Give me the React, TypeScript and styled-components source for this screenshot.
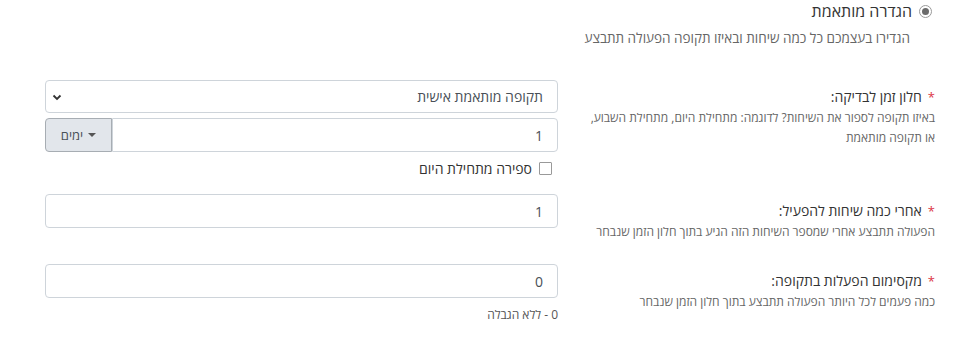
import React from 'react';
import styled, { createGlobalStyle } from 'styled-components';

const GlobalStyle = createGlobalStyle`
  body {
    margin: 0;
    background: #fff;
    font-family: "Open Sans", "Noto Sans", sans-serif;
    color: #333;
  }
`;

const Page = styled.div`
  direction: rtl;
  padding: 2px 44px 0 45px;
`;

const RadioHeader = styled.label`
  display: flex;
  align-items: center;
  gap: 7px;
  padding-right: 3px;
  font-size: 16px;
  color: #333;
  height: 18px;
`;

const RadioCircle = styled.span`
  width: 13px;
  height: 13px;
  border-radius: 50%;
  border: 1px solid #9a9a9a;
  display: flex;
  align-items: center;
  justify-content: center;
  box-sizing: border-box;

  &::after {
    content: '';
    width: 7px;
    height: 7px;
    border-radius: 50%;
    background: #6b6b6b;
  }
`;

const SubTitle = styled.div`
  font-size: 13.5px;
  color: #666;
  padding-right: 25px;
  margin-top: 9px;
  margin-bottom: 33px;
`;

const Row = styled.div<{ $gap: number }>`
  display: grid;
  grid-template-columns: 355px 1fr;
  column-gap: 22px;
  margin-bottom: ${(p) => p.$gap}px;
`;

const LabelBlock = styled.div`
  padding-top: 7px;
`;

const Label = styled.div`
  font-size: 14px;
  color: #333;
  line-height: 20px;
`;

const Star = styled.span`
  color: #dc3545;
  margin-left: 6px;
  font-size: 13px;
`;

const Desc = styled.div`
  font-size: 12px;
  color: #666;
  line-height: 20px;
  margin-top: 1px;
`;

const Field = styled.div`
  display: flex;
  flex-direction: column;
`;

const Box = styled.div`
  height: 34px;
  box-sizing: border-box;
  border: 1px solid #ced4da;
  border-radius: 4px;
  display: flex;
  align-items: center;
  padding: 0 14px;
  font-size: 14px;
  color: #495057;
  background: #fff;
`;

const SelectBox = styled(Box)`
  justify-content: space-between;
  padding-left: 6px;
  height: 33px;
`;

const Group = styled.div`
  display: flex;
  margin-top: 5px;
  height: 34px;
`;

const GroupInput = styled(Box)`
  flex: 1;
  border-radius: 0 4px 4px 0;
`;

const GroupButton = styled.div`
  width: 67px;
  box-sizing: border-box;
  border: 1px solid #a7adb3;
  border-radius: 4px 0 0 4px;
  background: #e2e6eb;
  display: flex;
  align-items: center;
  justify-content: center;
  gap: 5px;
  font-size: 13px;
  color: #495057;
`;

const Caret = styled.span`
  width: 0;
  height: 0;
  border-left: 4px solid transparent;
  border-right: 4px solid transparent;
  border-top: 4px solid #555;
`;

const CheckRow = styled.label`
  display: flex;
  align-items: center;
  gap: 7px;
  margin-top: 8px;
  padding-right: 6px;
  font-size: 14px;
  color: #333;
  height: 16px;
`;

const CheckBox = styled.span`
  width: 13px;
  height: 13px;
  box-sizing: border-box;
  border: 1px solid #999;
  border-radius: 1px;
  background: #fff;
`;

const Help = styled.div`
  font-size: 12px;
  color: #555;
  margin-top: 8px;
`;

const Chevron = () => (
  <svg width="10" height="10" viewBox="0 0 10 10">
    <path d="M1.5 3.5 L5 7 L8.5 3.5" fill="none" stroke="#333" strokeWidth="1.8" />
  </svg>
);

export default function App() {
  return (
    <>
      <GlobalStyle />
      <Page>
        <RadioHeader>
          <RadioCircle />
          הגדרה מותאמת
        </RadioHeader>
        <SubTitle>הגדירו בעצמכם כל כמה שיחות ובאיזו תקופה הפעולה תתבצע</SubTitle>

        <Row $gap={18}>
          <LabelBlock>
            <Label>
              <Star>*</Star>
              חלון זמן לבדיקה:
            </Label>
            <Desc>באיזו תקופה לספור את השיחות? לדוגמה: מתחילת היום, מתחילת השבוע, או תקופה מותאמת</Desc>
          </LabelBlock>
          <Field>
            <SelectBox>
              <span>תקופה מותאמת אישית</span>
              <Chevron />
            </SelectBox>
            <Group>
              <GroupInput>1</GroupInput>
              <GroupButton>
                <Caret />
                ימים
              </GroupButton>
            </Group>
            <CheckRow>
              <CheckBox />
              ספירה מתחילת היום
            </CheckRow>
          </Field>
        </Row>

        <Row $gap={22}>
          <LabelBlock>
            <Label>
              <Star>*</Star>
              אחרי כמה שיחות להפעיל:
            </Label>
            <Desc>הפעולה תתבצע אחרי שמספר השיחות הזה הגיע בתוך חלון הזמן שנבחר</Desc>
          </LabelBlock>
          <Field>
            <Box>1</Box>
          </Field>
        </Row>

        <Row $gap={0}>
          <LabelBlock>
            <Label>
              <Star>*</Star>
              מקסימום הפעלות בתקופה:
            </Label>
            <Desc>כמה פעמים לכל היותר הפעולה תתבצע בתוך חלון הזמן שנבחר</Desc>
          </LabelBlock>
          <Field>
            <Box>0</Box>
            <Help>0 - ללא הגבלה</Help>
          </Field>
        </Row>
      </Page>
    </>
  );
}
